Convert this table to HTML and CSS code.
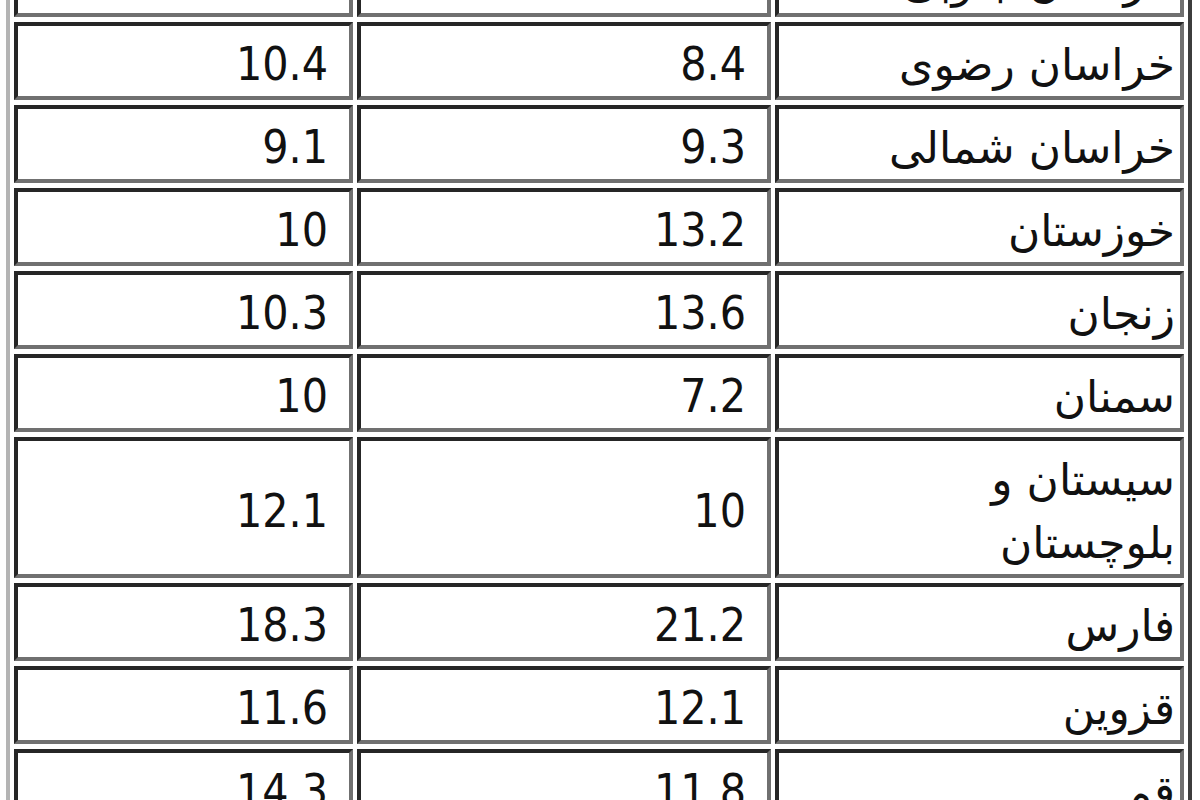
FILE: index.html
```html
<!DOCTYPE html>
<html lang="fa">
<head>
<meta charset="utf-8">
<title>جدول استان‌ها</title>
<link rel="stylesheet" href="styles.css">
</head>
<body>
<table class="grid" dir="rtl">
  <tbody>
    <tr><td class="name">خراسان جنوبی</td><td class="num">9.9</td><td class="num first">9.5</td></tr>
    <tr><td class="name">خراسان رضوی</td><td class="num">8.4</td><td class="num first">10.4</td></tr>
    <tr><td class="name">خراسان شمالی</td><td class="num">9.3</td><td class="num first">9.1</td></tr>
    <tr><td class="name">خوزستان</td><td class="num">13.2</td><td class="num first">10</td></tr>
    <tr><td class="name">زنجان</td><td class="num">13.6</td><td class="num first">10.3</td></tr>
    <tr><td class="name">سمنان</td><td class="num">7.2</td><td class="num first">10</td></tr>
    <tr><td class="name">سیستان و<br>بلوچستان</td><td class="num">10</td><td class="num first">12.1</td></tr>
    <tr><td class="name">فارس</td><td class="num">21.2</td><td class="num first">18.3</td></tr>
    <tr><td class="name">قزوین</td><td class="num">12.1</td><td class="num first">11.6</td></tr>
    <tr><td class="name">قم</td><td class="num">11.8</td><td class="num first">14.3</td></tr>
  </tbody>
</table>
</body>
</html>
```

FILE: styles.css
```css
html, body {
  margin: 0;
  padding: 0;
  background: #ffffff;
  overflow: hidden;
}

body {
  font-family: "DejaVu Sans Condensed", "DejaVu Sans", sans-serif;
  color: #111111;
}

.grid {
  width: 1186px;
  margin: -70px 0 0 6px;
  border-collapse: separate;
  border-spacing: 4px 5px;
  border-style: solid;
  border-width: 4px;
  border-color: #b4b4b4 #3c3c3c #3c3c3c #b4b4b4;
  table-layout: fixed;
}

.grid td {
  height: 70px;
  box-sizing: border-box;
  border-style: solid;
  border-width: 4px;
  border-color: #262626 #707070 #707070 #262626;
  font-size: 46px;
  line-height: 63px;
  padding: 7px 0 0 0;
  vertical-align: middle;
  text-align: right;
}

.grid td.name {
  width: 409px;
  padding-right: 5px;
  font-family: "DejaVu Sans", sans-serif;
  font-size: 44px;
}

.grid td.num {
  width: 414px;
  padding-right: 21px;
}

.grid td.num.first {
  width: 339px;
}
```
